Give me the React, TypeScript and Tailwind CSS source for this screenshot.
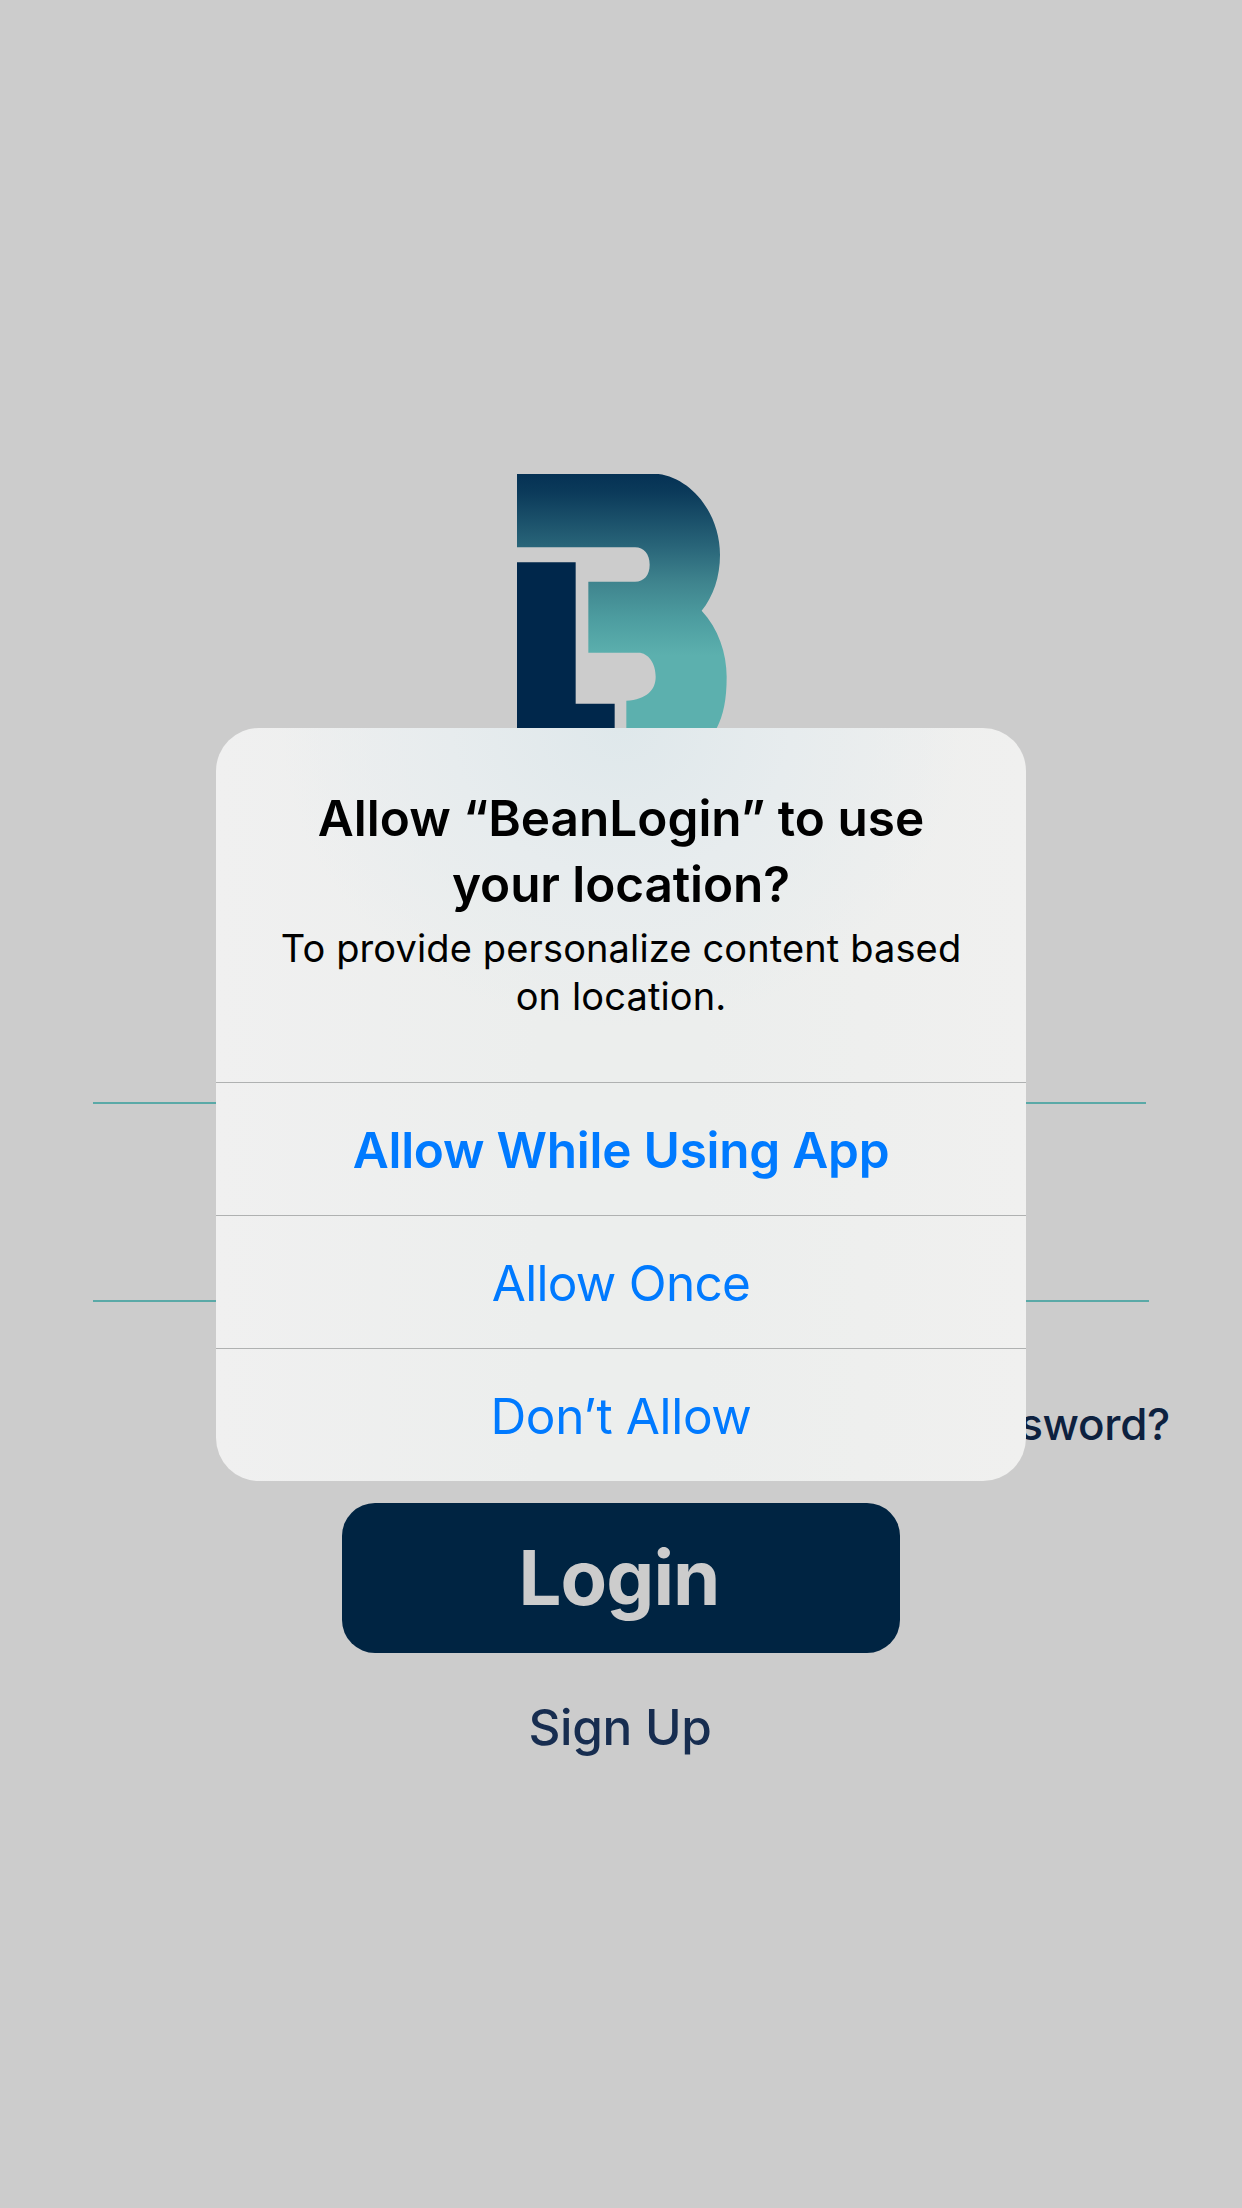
function BrandLogo() {
  return (
    <svg width="210" height="302" viewBox="51 42 630 906" aria-label="BeanLogin logo">
      <defs>
        <linearGradient id="brand" gradientUnits="userSpaceOnUse" x1="0" y1="42" x2="0" y2="948">
          <stop offset="0" stopColor="#053154" />
          <stop offset="0.06" stopColor="#0b3a5a" />
          <stop offset="0.24" stopColor="#296579" />
          <stop offset="0.36" stopColor="#3f848e" />
          <stop offset="0.48" stopColor="#4d9da0" />
          <stop offset="0.6" stopColor="#5cb0ae" />
          <stop offset="1" stopColor="#5cb0ae" />
        </linearGradient>
      </defs>
      <path
        fill="url(#brand)"
        d="M51 42H475C575 55 660 160 660 285C660 350 640 410 605 452C655 505 680 580 680 650C680 720 670 765 650 805C620 880 560 940 480 948H379V722C440 718 467 690 467 650C467 610 445 578 415 578H265V365H405C432 365 449 345 449 314C449 283 432 262 405 262H51Z"
      />
      <path fill="#00274b" d="M51 307H227V731H344V948H51Z" />
    </svg>
  );
}

function LocationDialog() {
  return (
    <div
      role="alertdialog"
      className="absolute top-[728px] left-[216px] flex h-[753px] w-[810px] flex-col overflow-hidden rounded-[43px] bg-[#efefef] bg-[radial-gradient(ellipse_340px_300px_at_50%_0%,#dfe8eb_0%,#e7ecee_50%,transparent_100%),linear-gradient(90deg,#f0f0f0_0%,#eceeed_40%,#eceeed_60%,#f0f0ef_100%)] text-center"
    >
      <div className="h-[354px] pt-[57px]">
        <h1 className="text-[49.5px] leading-[66px] font-semibold text-black">
          Allow “BeanLogin” to use
          <br />
          <span className="tracking-[-0.1px]">your location?</span>
        </h1>
        <p className="mt-[7px] text-[38px] leading-[48px] tracking-[0.13px] text-black">
          To provide personalize content based
          <br />
          on location.
        </p>
      </div>
      <button className="h-[133px] border-t border-[#afb1b1] pt-px text-[49.5px] leading-[132px] font-semibold tracking-[-0.25px] text-[#007aff]">
        Allow While Using App
      </button>
      <button className="h-[133px] border-t border-[#afb1b1] pt-px text-[49.5px] leading-[132px] tracking-[-0.7px] text-[#007aff]">
        Allow Once
      </button>
      <button className="h-[133px] border-t border-[#afb1b1] pt-px text-[49.5px] leading-[132px] tracking-[-0.35px] text-[#007aff]">
        Don’t Allow
      </button>
    </div>
  );
}

export default function App() {
  return (
    <main className="relative flex h-[2208px] w-[1242px] flex-col items-center overflow-hidden bg-[#cccccc] pt-[474px] font-['Inter',sans-serif]">
      <div className="pl-[2px]">
        <BrandLogo />
      </div>
      <div className="mt-[326px] w-full pl-[93px]">
        <div className="h-[2px] w-[1053px] bg-[#5aa9a7]" />
        <div className="mt-[196px] h-[2px] w-[1056px] bg-[#5aa9a7]" />
      </div>
      <a className="mt-[95px] mr-[72px] self-end text-[44px] leading-[54px] font-medium tracking-[-0.3px] text-[#0d213f]">
        Forgot Password?
      </a>
      <button className="mt-[52px] h-[150px] w-[558px] rounded-[33px] bg-[#002442] pr-[4px] pb-[2px] text-[76px] font-bold tracking-[-0.9px] text-[#cccccc]">
        Login
      </button>
      <a className="mt-[42px] pr-[2px] text-[49.5px] leading-[64px] font-medium tracking-[-0.3px] text-[#172d50]">
        Sign Up
      </a>
      <LocationDialog />
    </main>
  );
}
